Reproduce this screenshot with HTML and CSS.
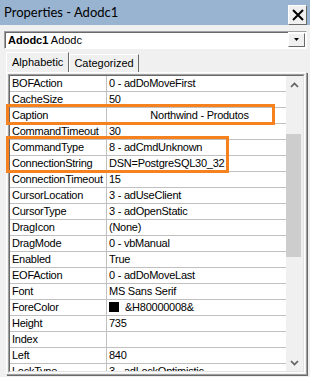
FILE: index.html
```html
<!DOCTYPE html>
<html lang="en">
<head>
    <meta charset="UTF-8">
    <title>Properties - Adodc1</title>
    <link rel="stylesheet" href="styles.css">
</head>
<body>
    <div class="window">
        <div class="titlebar">
            <span class="title">Properties - Adodc1</span>
            <button class="close" type="button">
                <svg width="12" height="12" viewBox="0 0 12 12">
                    <path d="M1 1 L11 11 M11 1 L1 11" stroke="#000" stroke-width="2" fill="none"/>
                </svg>
            </button>
        </div>

        <div class="combo">
            <span class="combo-text"><b>Adodc1</b> Adodc</span>
            <span class="combo-btn">
                <svg width="7" height="4" viewBox="0 0 7 4"><polygon points="1,0 6,0 3.5,3" fill="#000"/></svg>
            </span>
        </div>

        <div class="tabs">
            <div class="tab active">Alphabetic</div>
            <div class="tab">Categorized</div>
        </div>

        <div class="page">
            <div class="frame">
                <div class="frame-in">
                    <div class="grid">
                        <div class="row"><div class="name">BOFAction</div><div class="value">0 - adDoMoveFirst</div></div>
                        <div class="row"><div class="name">CacheSize</div><div class="value">50</div></div>
                        <div class="row"><div class="name">Caption</div><div class="value centered">Northwind - Produtos</div></div>
                        <div class="row"><div class="name">CommandTimeout</div><div class="value">30</div></div>
                        <div class="row"><div class="name">CommandType</div><div class="value">8 - adCmdUnknown</div></div>
                        <div class="row"><div class="name">ConnectionString</div><div class="value">DSN=PostgreSQL30_32</div></div>
                        <div class="row"><div class="name">ConnectionTimeout</div><div class="value">15</div></div>
                        <div class="row"><div class="name">CursorLocation</div><div class="value">3 - adUseClient</div></div>
                        <div class="row"><div class="name">CursorType</div><div class="value">3 - adOpenStatic</div></div>
                        <div class="row"><div class="name">DragIcon</div><div class="value">(None)</div></div>
                        <div class="row"><div class="name">DragMode</div><div class="value">0 - vbManual</div></div>
                        <div class="row"><div class="name">Enabled</div><div class="value">True</div></div>
                        <div class="row"><div class="name">EOFAction</div><div class="value">0 - adDoMoveLast</div></div>
                        <div class="row"><div class="name">Font</div><div class="value">MS Sans Serif</div></div>
                        <div class="row"><div class="name">ForeColor</div><div class="value"><span class="swatch"></span>&amp;H80000008&amp;</div></div>
                        <div class="row"><div class="name">Height</div><div class="value">735</div></div>
                        <div class="row"><div class="name">Index</div><div class="value"></div></div>
                        <div class="row"><div class="name">Left</div><div class="value">840</div></div>
                        <div class="row"><div class="name">LockType</div><div class="value">3 - adLockOptimistic</div></div>
                    </div>
                    <div class="scrollbar">
                        <div class="arrow">
                            <svg width="9" height="6" viewBox="0 0 9 6"><polyline points="1,5 4.5,1.5 8,5" stroke="#606060" stroke-width="1.7" fill="none"/></svg>
                        </div>
                        <div class="thumb"></div>
                        <div class="arrow down">
                            <svg width="9" height="6" viewBox="0 0 9 6"><polyline points="1,1 4.5,4.5 8,1" stroke="#606060" stroke-width="1.7" fill="none"/></svg>
                        </div>
                    </div>
                </div>
            </div>
        </div>

        <!-- highlight marks drawn over the grid -->
        <div class="mark mark-caption"></div>
        <div class="mark mark-connection"></div>
    </div>
</body>
</html>
```

FILE: styles.css
```css
* {
    box-sizing: border-box;
}
body {
    margin: 0;
    width: 310px;
    height: 377px;
    overflow: hidden;
    background: #f0f0f0;
    font-family: "Liberation Sans", Arial, sans-serif;
    font-size: 11px;
    color: #000;
}
.window {
    position: relative;
    height: 377px;
}
.titlebar {
    height: 25px;
    background: #99b4d1;
    display: flex;
    justify-content: space-between;
    padding: 0 3px 0 4px;
}
.title {
    font-family: Lato, "Liberation Sans", sans-serif;
    font-size: 13px;
    line-height: 25px;
}
.close {
    align-self: flex-end;
    width: 19px;
    height: 20px;
    margin-bottom: 0;
    padding: 0;
    background: #f0f0f0;
    border: 1px solid;
    border-color: #fff #696969 #696969 #fff;
    box-shadow: 0 0 0 0 #a0a0a0;
    display: flex;
    align-items: center;
    justify-content: center;
}
.combo {
    display: flex;
    margin: 6px 3px 0 4px;
    height: 18px;
    background: #fff;
    border: 1px solid;
    border-color: #a0a0a0 #fff #fff #a0a0a0;
}
.combo-text {
    flex: 1;
    border: 1px solid;
    border-color: #696969 transparent transparent #696969;
    border-right: none;
    border-bottom: none;
    padding-left: 2px;
    line-height: 14px;
    font-size: 11px;
}
.combo-btn {
    width: 17px;
    height: 14px;
    margin: 1px 1px 0 0;
    background: #f0f0f0;
    border: 1px solid;
    border-color: #fff #696969 #696969 #fff;
    display: flex;
    align-items: center;
    justify-content: center;
}
.tabs {
    display: flex;
    align-items: flex-end;
    margin-top: 3px;
    padding-left: 6px;
    height: 20px;
}
.tab {
    height: 18px;
    padding: 0 4px;
    line-height: 16px;
    border: 1px solid;
    border-color: #fff #696969 transparent #fff;
    border-bottom: none;
}
.tab.active {
    height: 20px;
    padding: 0 5px;
    line-height: 18px;
}
.page {
    margin-left: 6px;
    width: 301px;
    height: 303px;
    padding: 1px;
    border: 1px solid;
    border-color: #fff #a0a0a0 #a0a0a0 #fff;
    box-shadow: 1px 1px 0 #696969;
}
.frame {
    border: 1px solid;
    border-color: #a0a0a0 #fff #fff #a0a0a0;
}
.frame-in {
    display: flex;
    height: 297px;
    border: 1px solid;
    border-color: #696969 #e3e3e3 #e3e3e3 #696969;
}
.grid {
    width: 276px;
    height: 295px;
    overflow: hidden;
    background: #fff;
}
.row {
    display: flex;
    height: 16px;
    border-bottom: 1px solid #c0c0c0;
    line-height: 15px;
    white-space: nowrap;
    letter-spacing: -0.25px;
}
.name {
    width: 97px;
    padding-left: 2px;
    border-right: 1px solid #c0c0c0;
    overflow: hidden;
}
.value {
    flex: 1;
    padding-left: 2px;
    overflow: hidden;
}
.value.centered {
    text-align: center;
    padding-left: 6px;
}
.swatch {
    display: inline-block;
    width: 10px;
    height: 10px;
    margin-right: 6px;
    background: #000;
    vertical-align: -1px;
}
.scrollbar {
    width: 17px;
    background: #f0f0f0;
    display: flex;
    flex-direction: column;
}
.arrow {
    height: 17px;
    display: flex;
    align-items: center;
    justify-content: center;
}
.arrow.down {
    margin-top: auto;
}
.thumb {
    margin-top: 41px;
    width: 15px;
    height: 123px;
    background: #cdcdcd;
}
.mark {
    position: absolute;
    left: 6px;
    border: 3px solid #f5821f;
}
.mark-caption {
    top: 104px;
    width: 269px;
    height: 21px;
}
.mark-connection {
    top: 136px;
    width: 223px;
    height: 37px;
}
```
